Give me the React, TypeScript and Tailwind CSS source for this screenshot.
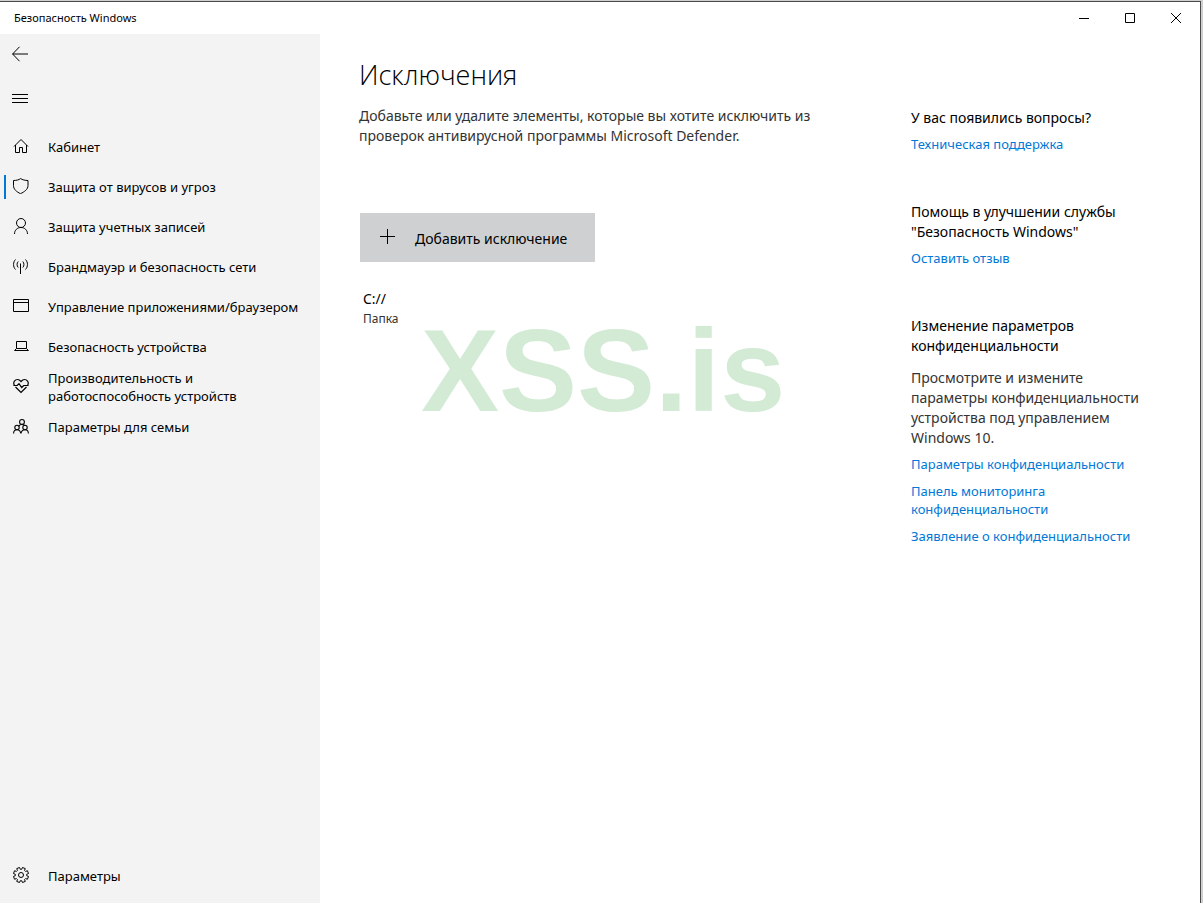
import type { ReactNode } from "react";

function Icon({ children, size = 16 }: { children: ReactNode; size?: number }) {
  return (
    <svg
      width={size}
      height={size}
      viewBox="0 0 16 16"
      fill="none"
      stroke="currentColor"
      strokeWidth="1"
      aria-hidden="true"
      className="shrink-0"
    >
      {children}
    </svg>
  );
}

const navItems: { label: string; active?: boolean; icon: ReactNode }[] = [
  {
    label: "Кабинет",
    icon: (
      <>
        <path d="M1 8.500 8 1.500l7 7" />
        <path d="M2.500 7v7.500h4v-5h3v5h4V7" />
      </>
    ),
  },
  {
    label: "Защита от вирусов и угроз",
    active: true,
    icon: <path d="M7.500.6C6 1.800 3.500 2.500.500 2.500v5c0 3.900 3 6.200 7 8.200 4-2 7.500-4.300 7.500-8.200v-5C12 2.500 9.500 1.800 7.500.6Z" />,
  },
  {
    label: "Защита учетных записей",
    icon: (
      <>
        <circle cx="8" cy="5" r="4.500" />
        <path d="M1.500 16c0-3.800 2.800-6.500 6.500-6.500s6.500 2.700 6.500 6.500" />
      </>
    ),
  },
  {
    label: "Брандмауэр и безопасность сети",
    icon: (
      <>
        <path d="M7.500 5.500V16M5.200 3.500c-1.500 1.600-1.500 4.400 0 6M9.800 3.500c1.500 1.600 1.500 4.400 0 6" />
        <path d="M2.500 1.500c-2.600 2.600-2.600 7.400 0 10M12.500 1.500c2.600 2.600 2.600 7.400 0 10" />
      </>
    ),
  },
  {
    label: "Управление приложениями/браузером",
    icon: <path d="M.5 1.500h15v12H.5zM.5 4.500h15" />,
  },
  {
    label: "Безопасность устройства",
    icon: <path d="M3.500 3.500h10v7h-10zM3.500 10.500l-2 2h14l-2-2" />,
  },
  {
    label: "Производительность и работоспособность устройств",
    icon: (
      <g strokeWidth="1.2">
        <path d="M1.300 7.200C-.4 3.700 2.300 1.500 4.500 1.500c1.500 0 2.500.8 3.500 2 1-1.200 2-2 3.500-2 2.200 0 4.900 2.200 3.200 5.700" />
        <path d="M.5 7.500h3.700L6 5.700l2.700 3.800 2-2h4.800" />
        <path d="M2.500 9 8 14.500 13.500 9" />
      </g>
    ),
  },
  {
    label: "Параметры для семьи",
    icon: (
      <g strokeWidth="1.100" transform="translate(0 1)">
        <circle cx="9" cy="2.900" r="2.400" />
        <circle cx="4" cy="8.500" r="2.200" />
        <circle cx="12" cy="8.500" r="2.200" />
        <path d="M.6 14.500c0-2.400 1.400-3.800 3.400-3.800s3.400 1.400 3.900 3.800c.5-2.400 2.100-3.800 4.100-3.800s3.400 1.400 3.400 3.800M5.700 7.200c.6-1 1.800-1.700 3.100-1.700M9 5.500c1.400 0 2 .4 2.600 1" />
      </g>
    ),
  },
];

function gearPath() {
  const points: string[] = [];
  for (let i = 0; i < 8; i++) {
    const base = (i * Math.PI) / 4 + Math.PI / 8;
    for (const [offset, r] of [
      [-0.26, 5.8],
      [-0.2, 7.7],
      [0.2, 7.7],
      [0.26, 5.8],
    ]) {
      points.push(`${(8 + r * Math.cos(base + offset)).toFixed(2)} ${(8 + r * Math.sin(base + offset)).toFixed(2)}`);
    }
  }
  return `M${points.join("L")}Z`;
}

function NavRow({ label, icon, active }: { label: string; icon: ReactNode; active?: boolean }) {
  return (
    <a
      href="#"
      aria-current={active ? "page" : undefined}
      className="flex h-10 items-center pl-1 text-[13px] leading-[18px] text-black"
    >
      <span className={active ? "h-6 w-0.5 bg-[#0078d7]" : "h-6 w-0.5"} />
      <span className="mr-[19px] ml-[7px] pb-0.5">
        <Icon>{icon}</Icon>
      </span>
      <span className="w-[258px]">{label}</span>
    </a>
  );
}

function SideLink({ children }: { children: ReactNode }) {
  return (
    <a href="#" className="block text-[13px] leading-[18px] text-[#0078d7]">
      {children}
    </a>
  );
}

export default function App() {
  return (
    <div className="min-h-screen bg-[#cfcfcf] pt-px pr-0.5 font-['Noto_Sans','Open_Sans',sans-serif]">
      <div className="flex min-h-[calc(100vh-1px)] flex-col border-t border-r border-[#4a4a4a] bg-white text-black">
        <header className="flex h-8 items-center justify-between pl-3.5">
          <span className="text-[11px] leading-4">Безопасность Windows</span>
          <div className="flex pr-px">
            <button type="button" aria-label="Свернуть" className="flex h-8 w-[46px] items-center justify-center">
              <svg width="10" height="10" viewBox="0 0 10 10" stroke="#000" fill="none"><path d="M0 5.500h10" /></svg>
            </button>
            <button type="button" aria-label="Развернуть" className="flex h-8 w-[46px] items-center justify-center">
              <svg width="10" height="10" viewBox="0 0 10 10" stroke="#000" fill="none"><path d="M.5.500h9v9h-9z" /></svg>
            </button>
            <button type="button" aria-label="Закрыть" className="flex h-8 w-[46px] items-center justify-center">
              <svg width="10" height="10" viewBox="0 0 10 10" stroke="#000" fill="none"><path d="M0 0l10 10M10 0L0 10" /></svg>
            </button>
          </div>
        </header>

        <div className="flex flex-1">
          <nav className="flex w-80 shrink-0 flex-col bg-[#f3f3f3] pb-[7px]">
            <button type="button" aria-label="Назад" className="flex h-10 w-10 items-center justify-center">
              <Icon><path d="M.5 8H16M7.500.8.600 8l6.900 7.200" /></Icon>
            </button>
            <button type="button" aria-label="Меню" className="mt-1 flex h-10 w-10 items-center justify-center">
              <Icon><path d="M0 4.500h16M0 8.500h16M0 12.500h16" /></Icon>
            </button>
            <div className="mt-[9px]">
              {navItems.map((item) => (
                <NavRow key={item.label} {...item} />
              ))}
            </div>
            <div className="mt-auto">
              <NavRow
                label="Параметры"
                icon={
                  <>
                    <path d={gearPath()} />
                    <circle cx="8" cy="8" r="2.500" />
                  </>
                }
              />
            </div>
          </nav>

          <main className="relative flex-1 pt-[23px] pl-[39px]">
            <h1 className="font-['Open_Sans','Noto_Sans',sans-serif] text-[27px] leading-9 font-light">Исключения</h1>
            <p className="mt-[13px] w-[480px] text-[14px] leading-5 text-[#333]">
              Добавьте или удалите элементы, которые вы хотите исключить из проверок антивирусной программы Microsoft Defender.
            </p>
            <button
              type="button"
              className="mt-[67px] ml-px flex h-[49px] w-[235px] items-center bg-[#cfd0d2] pl-5 text-[14px] leading-5"
            >
              <svg width="15" height="15" viewBox="0 0 15 15" stroke="#000" className="mr-5 mb-0.5"><path d="M0 7.500h15M7.500 0v15" /></svg>
              <span className="pt-0.5">Добавить исключение</span>
            </button>
            <div className="mt-[27px] pl-1">
              <div className="text-[14px] leading-5">C://</div>
              <div className="text-[12px] leading-5 text-[#333]">Папка</div>
            </div>
            <div className="pointer-events-none absolute top-[270px] left-[101px] font-['Liberation_Sans',sans-serif] text-[117px] leading-[134px] font-bold text-[#d3ebd5]">
              XSS.is
            </div>
          </main>

          <aside className="w-[289px] shrink-0 pt-[74px] pr-10 text-[14px] leading-5">
            <section>
              <h2>У вас появились вопросы?</h2>
              <div className="mt-[7px]">
                <SideLink>Техническая поддержка</SideLink>
              </div>
            </section>
            <section className="mt-[49px]">
              <h2>Помощь в улучшении службы "Безопасность Windows"</h2>
              <div className="mt-[7px]">
                <SideLink>Оставить отзыв</SideLink>
              </div>
            </section>
            <section className="mt-[49px]">
              <h2>Изменение параметров конфиденциальности</h2>
              <p className="mt-3 text-[#333]">
                Просмотрите и измените параметры конфиденциальности устройства под управлением Windows 10.
              </p>
              <div className="mt-[7px] flex flex-col gap-[9px]">
                <SideLink>Параметры конфиденциальности</SideLink>
                <SideLink>Панель мониторинга конфиденциальности</SideLink>
                <SideLink>Заявление о конфиденциальности</SideLink>
              </div>
            </section>
          </aside>
        </div>
      </div>
    </div>
  );
}
